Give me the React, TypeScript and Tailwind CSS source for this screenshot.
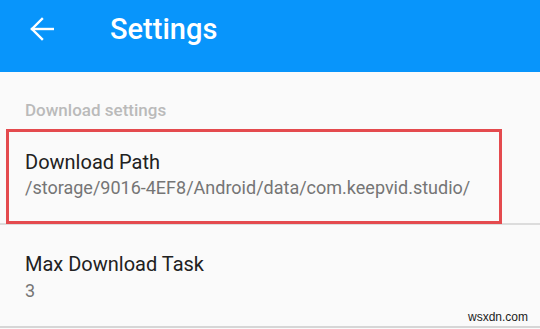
import React from "react";

export default function App() {
  return (
    <div
      className="w-[540px] h-[329px] overflow-hidden bg-[#fafafa] flex flex-col"
      style={{ fontFamily: "Roboto, 'Noto Sans', sans-serif" }}
    >
      <div className="h-[72px] bg-[#0895fb] flex items-start shrink-0">
        <svg
          width="24"
          height="24"
          viewBox="0 0 24 24"
          className="ml-[30px] mt-[17px]"
          fill="none"
          stroke="#ffffff"
          strokeWidth="2.4"
          strokeLinecap="square"
        >
          <path d="M2 12H23" />
          <path d="M12 2L2 12L12 22" />
        </svg>
        <div className="ml-[56px] mt-[15px] text-[29px] leading-[28px] font-medium text-white">
          Settings
        </div>
      </div>

      <div className="pt-[30px] pl-[25px] text-[17px] leading-[16px] font-medium text-[#bababa]">
        Download settings
      </div>

      <div className="relative mt-[11px] border-b-2 border-[#dcdcdc] pl-[25px] pt-[21px] pb-[25px]">
        <div className="text-[20px] leading-[24px] text-[#212121]">Download Path</div>
        <div className="mt-[4px] text-[18px] leading-[20px] text-[#757575]">
          /storage/9016-4EF8/Android/data/com.keepvid.studio/
        </div>
        <div className="absolute left-[6px] top-0 w-[496px] h-[95px] border-[3px] border-[#e44a4e]" />
      </div>

      <div className="relative border-b-2 border-[#d6d6d6] pl-[25px] pt-[27px] pb-[25px]">
        <div className="text-[20px] leading-[24px] text-[#212121]">Max Download Task</div>
        <div className="mt-[5px] text-[18px] leading-[20px] text-[#757575]">3</div>
        <div
          className="absolute right-[12px] bottom-[2px] text-[12px] leading-[13px] text-[#222222]"
          style={{ fontFamily: "'Liberation Sans', Arial, sans-serif" }}
        >
          wsxdn.com
        </div>
      </div>
    </div>
  );
}
